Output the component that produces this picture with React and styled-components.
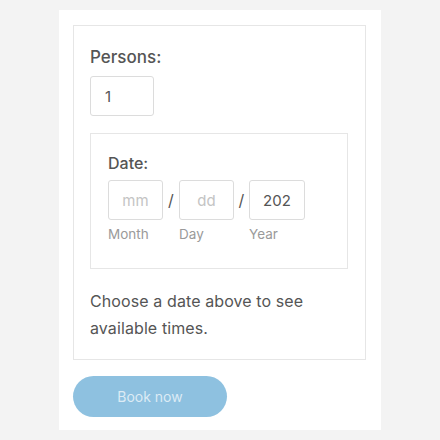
import React from "react";
import styled, { createGlobalStyle } from "styled-components";

const Global = createGlobalStyle`
  html, body { margin: 0; padding: 0; background: #f3f3f3; }
  body { font-family: Inter, "Open Sans", "Liberation Sans", sans-serif; }
`;

const Page = styled.div`
  width: 440px;
  height: 440px;
  padding: 10px 0 0 59px;
  box-sizing: border-box;
`;

const Card = styled.div`
  width: 322px;
  height: 420px;
  background: #fff;
  padding: 15px 15px 0 14px;
  box-sizing: border-box;
  display: flex;
  flex-direction: column;
  gap: 16px;
`;

const Panel = styled.div`
  border: 1px solid #e6e6e6;
  height: 335px;
  box-sizing: border-box;
  padding: 20px 17px 0 16px;
  display: flex;
  flex-direction: column;
`;

const Label = styled.div`
  font-size: ${(p) => p.$size || 16}px;
  font-weight: 500;
  color: #555;
  line-height: 22px;
  margin-bottom: ${(p) => p.$mb || 8}px;
`;

const Input = styled.div`
  width: ${(p) => p.$w || 64}px;
  height: 40px;
  box-sizing: border-box;
  border: 1px solid #dcdcdc;
  border-radius: 3px;
  display: flex;
  align-items: center;
  justify-content: ${(p) => (p.$center ? "center" : "flex-start")};
  padding-left: ${(p) => (p.$center ? 0 : 14)}px;
  font-size: 15px;
  color: ${(p) => (p.$placeholder ? "#c4c4c4" : "#555")};
`;

const Fieldset = styled.div`
  margin-top: 17px;
  height: 136px;
  box-sizing: border-box;
  border: 1px solid #e6e6e6;
  padding: 18px 0 0 17px;
`;

const DateRow = styled.div`
  display: flex;
  align-items: flex-start;
`;

const DateCol = styled.div`
  display: flex;
  flex-direction: column;
  gap: 5px;
`;

const Sub = styled.div`
  font-size: 13.5px;
  color: #9a9a9a;
  line-height: 18px;
`;

const Slash = styled.div`
  width: ${(p) => p.$w}px;
  height: 40px;
  display: flex;
  align-items: center;
  justify-content: center;
  font-size: 16px;
  color: #555;
`;

const Info = styled.p`
  margin: 19px 0 0 0;
  font-size: 16px;
  letter-spacing: 0.1px;
  line-height: 27px;
  color: #555;
`;

const Button = styled.button`
  width: 154px;
  height: 41px;
  border: none;
  border-radius: 21px;
  background: #8ec1e0;
  color: #dcebf5;
  font-family: inherit;
  font-size: 14px;
  padding: 0;
`;

export default function App() {
  return (
    <>
      <Global />
      <Page>
        <Card>
          <Panel>
            <Label $size={17}>Persons:</Label>
            <Input>1</Input>
            <Fieldset>
              <Label $mb={6}>Date:</Label>
              <DateRow>
                <DateCol>
                  <Input $w={55} $center $placeholder>mm</Input>
                  <Sub>Month</Sub>
                </DateCol>
                <Slash $w={16}>/</Slash>
                <DateCol>
                  <Input $w={55} $center $placeholder>dd</Input>
                  <Sub>Day</Sub>
                </DateCol>
                <Slash $w={15}>/</Slash>
                <DateCol>
                  <Input $w={56} $center>202</Input>
                  <Sub>Year</Sub>
                </DateCol>
              </DateRow>
            </Fieldset>
            <Info>
              Choose a date above to see
              <br />
              available times.
            </Info>
          </Panel>
          <Button>Book now</Button>
        </Card>
      </Page>
    </>
  );
}
